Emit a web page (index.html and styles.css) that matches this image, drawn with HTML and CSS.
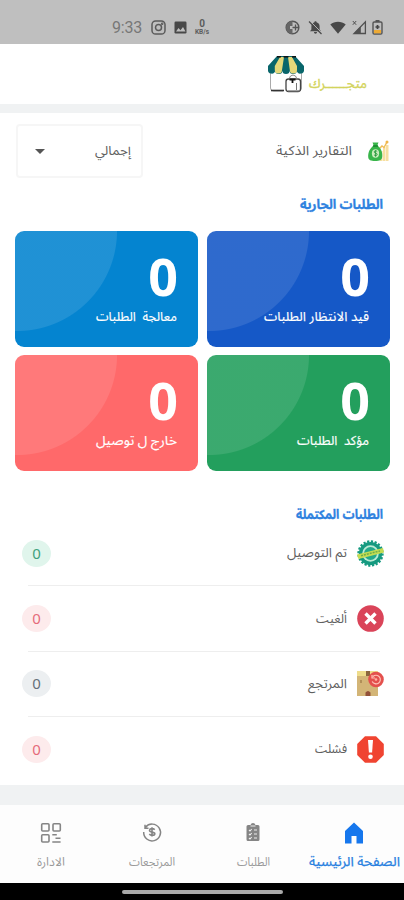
FILE: index.html
```html
<!DOCTYPE html>
<html lang="ar" dir="rtl">
<head>
<meta charset="utf-8">
<title>متجرك</title>
<link rel="stylesheet" href="styles.css">
</head>
<body>
<div class="status" dir="ltr">
  <span class="clock">9:33</span>
  <svg class="st-insta" width="15" height="15" viewBox="0 0 15 15" fill="none" stroke="#5b5b5b" stroke-width="1.5"><rect x="1" y="1" width="13" height="13" rx="3.6"/><circle cx="7.5" cy="7.5" r="3"/><circle cx="11.2" cy="3.8" r=".5"/></svg>
  <svg class="st-pic" width="13" height="13" viewBox="0 0 13 13"><rect x=".5" y=".5" width="12" height="12" rx="1.2" fill="#484848"/><path d="M2 10.5 4.5 7l2 2.2L9 6l2.5 4.5z" fill="#bfbfbf"/></svg>
  <span class="speed"><b>0</b><i>KB/s</i></span>
  <svg class="st-data" width="15" height="15" viewBox="0 0 15 15"><circle cx="7.5" cy="7.5" r="6.3" fill="none" stroke="#555" stroke-width="1.5"/><path d="M7.5 1a6.5 6.5 0 0 0 0 13V9H5V6h2.500z" fill="#666"/><path d="M7.500 7.500h6M10.500 4.500v6" stroke="#555" stroke-width="1.300"/></svg>
  <svg class="st-bell" width="15" height="15" viewBox="0 0 15 15"><path d="M7.500 1.200c.8 0 1.100.5 1.100 1.100 2 .6 3 2.200 3 4.200v3l1.400 1.700H2l1.400-1.700v-3c0-2 1-3.600 3-4.200 0-.6.300-1.100 1.100-1.100zM6 12h3c0 1-.6 1.700-1.500 1.700S6 13 6 12z" fill="#4a4a4a"/><path d="M2.300 1.300l12 12" stroke="#bfbfbf" stroke-width="1"/><path d="M1 1.500l12.500 12.500" stroke="#4a4a4a" stroke-width="1.300"/></svg>
  <svg class="st-wifi" width="16" height="13" viewBox="0 0 16 13"><path d="M.3 3.500C4.700-.2 11.300-.2 15.700 3.500L8 12.800z" fill="#484848"/></svg>
  <svg class="st-sig" width="15" height="15" viewBox="0 0 15 15"><path d="M13.400 1.800v11.700H2z" fill="none" stroke="#505050" stroke-width="1.300"/><path d="M8.800 6.600v7H2z" fill="#505050"/><path d="M.8 1l3.400 3.800M4.200 1 .8 4.800" stroke="#505050" stroke-width="1"/></svg>
  <svg class="st-bat" width="11" height="15" viewBox="0 0 11 15"><path d="M3.500 0h4v2h-4z" fill="#555"/><rect x="1" y="2" width="9" height="12" rx="1.200" fill="none" stroke="#555" stroke-width="1.400"/><path d="M2 10h7v3.300H2z" fill="#edaa35"/><path d="M5.500 5v4M3.500 7h4" stroke="#444" stroke-width="1.700"/></svg>
</div>

<header class="brand">
  <svg class="brand-name" width="58" height="18" viewBox="0 0 58 18"><text x="58" y="13" direction="rtl" textLength="58" lengthAdjust="spacingAndGlyphs">متجــــــرك</text></svg>
  <svg class="shop" width="38" height="37" viewBox="0 0 38 37">
    <path d="M3.500 16v16q0 3 3 3H16M34.500 16v16q0 2-1.500 2.500" fill="none" stroke="#aaa" stroke-width="1"/>
    <path d="M4 34.500h13" stroke="#333" stroke-width="1.600"/>
    <path d="M10 0h18l9 10v3.500a3.500 3.500 0 0 1-7.200 1 3.600 3.600 0 0 1-7.200 0 3.600 3.600 0 0 1-7.200 0 3.600 3.600 0 0 1-7.200 0 3.500 3.500 0 0 1-7.200-1V10z" fill="#09666b"/>
    <path d="M13 1h4l-2 13a3.600 3.600 0 0 1-7.200 0V10zM21 1h4l5 9v4a3.600 3.600 0 0 1-7.200 0z" fill="#e5d879"/>
    <path d="M10 .8h4M16.500.8h5M25 .8h4" stroke="#111" stroke-width="1.600"/>
    <rect x="19" y="23" width="14.500" height="12.500" rx="2.500" fill="#fff" stroke="#444" stroke-width="1.300"/>
    <path d="M22 23q1-4 4-4t4 4" fill="none" stroke="#888" stroke-width="1"/>
    <path d="M22.500 23.500h6M25.500 23v4" stroke="#111" stroke-width="1.800"/>
    <path d="M29.500 27v7M21 35h12" stroke="#777" stroke-width="1"/>
  </svg>
</header>

<main>
  <section class="panel">
    <div class="filter">
      <svg class="money" width="22" height="22" viewBox="0 0 22 22">
        <path d="M13 11h2.500v10H13zM16 7h2.500v14H16zM19 5h2.500v16H19z" fill="#f7dfa0"/>
        <path d="M11 10l4-4 2 1.500L20 2" fill="none" stroke="#efbd57" stroke-width="1.500"/><circle cx="20" cy="2" r="1.500" fill="#f0b548"/>
        <path d="M5.500 2.500h6L10.300 5.500c3.700 2.500 5.500 7 4.900 11.500-.4 3-2.500 4-7 4s-6.800-1-7-4c-.3-5 2-9 5.500-11.500z" fill="#38b54a"/>
        <path d="M6 6h5" stroke="#14862d" stroke-width="1.500"/><ellipse cx="8.500" cy="13.500" rx="3.600" ry="4.200" fill="#ccecbd"/>
        <path d="M10.200 11.500c-1-1.200-3.200-.8-3 .6s2.900.8 3 2.200-2.200 1.700-3.200.5M8.600 10.300v6.500" fill="none" stroke="#25983a" stroke-width=".9"/>
      </svg>
      <svg class="label" width="76" height="22" viewBox="0 0 76 22"><text x="76" y="14.500" direction="rtl" textLength="76" lengthAdjust="spacingAndGlyphs">التقارير الذكية</text></svg>
      <div class="select">
        <svg class="label" width="37" height="22" viewBox="0 0 37 22"><text x="37" y="14.500" direction="rtl" textLength="36" lengthAdjust="spacingAndGlyphs">إجمالي</text></svg>
        <span class="caret"></span>
      </div>
    </div>
    <h2><svg width="84" height="22" viewBox="0 0 84 22"><text x="84" y="15" direction="rtl" textLength="83" lengthAdjust="spacingAndGlyphs">الطلبات الجارية</text></svg></h2>
    <div class="cards">
      <article class="card blue"><strong>0</strong><svg width="106" height="24" viewBox="0 0 106 24"><text x="105" y="16.500" direction="rtl" textLength="105" lengthAdjust="spacingAndGlyphs">قيد الانتظار الطلبات</text></svg></article>
      <article class="card sky"><strong>0</strong><svg width="82" height="24" viewBox="0 0 82 24"><text x="81" y="16.500" direction="rtl" textLength="81" lengthAdjust="spacingAndGlyphs">معالجة &#160;الطلبات</text></svg></article>
      <article class="card green"><strong>0</strong><svg width="73" height="24" viewBox="0 0 73 24"><text x="72" y="16.500" direction="rtl" textLength="72" lengthAdjust="spacingAndGlyphs">مؤكد &#160;الطلبات</text></svg></article>
      <article class="card coral"><strong>0</strong><svg width="82" height="24" viewBox="0 0 82 24"><text x="81" y="16.500" direction="rtl" textLength="81" lengthAdjust="spacingAndGlyphs">خارج ل توصيل</text></svg></article>
    </div>
    <h2 class="done"><svg width="87" height="22" viewBox="0 0 87 22"><text x="87" y="15" direction="rtl" textLength="87" lengthAdjust="spacingAndGlyphs">الطلبات المكتملة</text></svg></h2>
    <ul class="rows">
      <li>
        <svg width="27" height="27" viewBox="0 0 27 27"><circle cx="13.500" cy="13.500" r="11.600" fill="#159a80"/><circle cx="13.500" cy="13.500" r="12" fill="none" stroke="#159a80" stroke-width="2.400" stroke-dasharray="2.200 1.570"/><circle cx="13.500" cy="13.500" r="8.300" fill="#bcebd5"/><circle cx="13.500" cy="13.500" r="6.500" fill="#24a98b"/><path d="M0 14.500 26 8l1 4.500L1.500 19z" fill="#c4dc52"/><path d="M4 15.700l19-4.700" stroke="#6eae4c" stroke-width="1.500" stroke-dasharray="2 1"/></svg>
        <svg class="label" width="60" height="22" viewBox="0 0 60 22"><text x="60" y="15" direction="rtl" textLength="60" lengthAdjust="spacingAndGlyphs">تم التوصيل</text></svg>
        <span class="count mint">0</span>
      </li>
      <li>
        <svg width="27" height="27" viewBox="0 0 27 27"><circle cx="13.500" cy="13.500" r="13.300" fill="#da4459"/><path d="M8.500 8.500l10 10M18.500 8.500l-10 10" stroke="#fff" stroke-width="3.400"/></svg>
        <svg class="label" width="31" height="22" viewBox="0 0 31 22"><text x="31" y="15" direction="rtl" textLength="31" lengthAdjust="spacingAndGlyphs">ألغيت</text></svg>
        <span class="count pink">0</span>
      </li>
      <li>
        <svg width="27" height="27" viewBox="0 0 27 27"><path d="M0 1h21v25H0z" fill="#d3b577"/><path d="M0 1h21v5H0z" fill="#eedc8b"/><path d="M9 1h4v5H9z" fill="#8b653d"/><path d="M8.500 22.500q2.500-3 5 0v3.500h-5z" fill="#925139"/><path d="M4 10v3" stroke="#8d6a3a"/><circle cx="19" cy="9.500" r="7.800" fill="#e4504d"/><path d="M16 6.500a4.300 4.300 0 1 1-.8 5M15 5v3h3" fill="none" stroke="#ffc4b8" stroke-width="1.200"/><circle cx="19" cy="9.500" r="1.300" fill="#ffb2a6"/></svg>
        <svg class="label" width="39" height="22" viewBox="0 0 39 22"><text x="39" y="15" direction="rtl" textLength="39" lengthAdjust="spacingAndGlyphs">المرتجع</text></svg>
        <span class="count gray">0</span>
      </li>
      <li>
        <svg width="27" height="27" viewBox="0 0 27 27"><path d="M8 .2h11L26.800 8v11L19 26.800H8L.2 19V8z" fill="#f04431"/><path d="M11 4h5l-.9 12.500h-3.200z" fill="#fff"/><circle cx="13.500" cy="20.800" r="2.300" fill="#fff"/></svg>
        <svg class="label" width="32" height="22" viewBox="0 0 32 22"><text x="32" y="15" direction="rtl" textLength="32" lengthAdjust="spacingAndGlyphs">فشلت</text></svg>
        <span class="count pink">0</span>
      </li>
    </ul>
  </section>
</main>

<nav>
  <a class="active">
    <svg width="22" height="22" viewBox="0 0 22 22"><path d="M11 .5 20 9v12.500h-6.500V14h-5v7.500H2V9z" fill="#1677ed"/></svg>
    <svg width="92" height="24" viewBox="0 0 92 24"><text x="92" y="16" direction="rtl" textLength="91" lengthAdjust="spacingAndGlyphs">الصفحة الرئيسية</text></svg>
  </a>
  <a>
    <svg width="22" height="22" viewBox="0 0 22 22"><path d="M6 3h2.500a2.600 2.600 0 0 1 5 0H16q1.500 0 1.500 1.500v13Q17.500 19 16 19H6q-1.500 0-1.500-1.500v-13Q4.500 3 6 3z" fill="#858585"/><path d="M7 8l1 1 1.700-2M12 8h3M7 12l1 1 1.700-2M12 12h3M7 16l1 1 1.700-2M12 16h3M8.500 4h5" fill="none" stroke="#eee" stroke-width="1.100"/></svg>
    <svg width="34" height="24" viewBox="0 0 34 24"><text x="34" y="16" direction="rtl" textLength="33" lengthAdjust="spacingAndGlyphs">الطلبات</text></svg>
  </a>
  <a>
    <svg width="22" height="22" viewBox="0 0 22 22" fill="none" stroke="#858585" stroke-width="1.500"><path d="M4.500 5.300A8.400 8.400 0 1 1 2.700 10M4 2.800v3.400h3.500"/><path d="M13.700 7.700c-1.500-1.700-5.200-1.300-5.200.7 0 2.300 5.300 1.100 5.300 3.300 0 2-3.800 2.200-5.500.4M11 5.300v9.300" stroke-width="1.600"/></svg>
    <svg width="46" height="24" viewBox="0 0 46 24"><text x="46" y="16" direction="rtl" textLength="46" lengthAdjust="spacingAndGlyphs">المرتجعات</text></svg>
  </a>
  <a>
    <svg width="22" height="22" viewBox="0 0 22 22" fill="none" stroke="#858585" stroke-width="1.600"><rect x="1.700" y="1.700" width="7.300" height="7.300" rx="1"/><rect x="13" y="1.700" width="7.300" height="7.300" rx="1"/><rect x="1.700" y="12.700" width="7.300" height="7.300" rx="1"/><path d="M12.300 12.800h4.500M15.500 16.300h5M12.300 20h8.300"/></svg>
    <svg width="29" height="24" viewBox="0 0 29 24"><text x="29" y="16" direction="rtl" textLength="28" lengthAdjust="spacingAndGlyphs">الادارة</text></svg>
  </a>
</nav>
<footer><span></span></footer>
</body>
</html>
```

FILE: styles.css
```css
* { box-sizing: border-box; }
body { margin: 0; width: 404px; height: 900px; overflow: hidden; display: flex; flex-direction: column; background: #fff; color: #555; font-family: "Noto Sans Arabic", "DejaVu Sans", sans-serif; }
svg { display: block; flex: none; overflow: visible; }
svg text { font-size: 13px; fill: #606060; }
.status { height: 44px; flex: none; background: #bfbfbf; display: flex; align-items: center; padding: 11px 21px 0 112px; }
.clock { width: 39px; font: 16px/18px Roboto, sans-serif; letter-spacing: -.2px; color: #777; }
.st-pic { margin-left: 8px; }
.speed { margin-left: 7px; width: 16px; display: flex; flex-direction: column; align-items: center; gap: 1px; color: #5c5c5c; font-family: Roboto, sans-serif; }
.speed b { font-size: 10px; line-height: 9px; }
.speed i { font: bold 6.5px/7px Roboto, sans-serif; }
.st-data { margin-left: 75px; }
.st-bell { margin-left: 8px; }
.st-wifi { margin-left: 7px; }
.st-sig { margin-left: 6px; }
.st-bat { margin-left: auto; }
.brand { height: 60px; flex: none; display: flex; align-items: flex-start; padding: 12px 37px 0 0; }
.brand-name { margin-top: 19px; }
.brand-name text { font-size: 13px; fill: #d3d45c; stroke: #d3d45c; stroke-width: .35px; }
.shop { margin-right: 4px; }
main { height: 701px; flex: none; background: #f0f2f3; padding: 9px 0 20px; }
.panel { height: 672px; background: #fff; padding-top: 11px; }
.filter { height: 54px; display: flex; align-items: center; padding: 0 15px 0 16px; }
.filter > .label { margin-right: 15px; }
.select { margin-right: auto; width: 127px; height: 54px; border: 2px solid #f6f6f6; border-radius: 4px; display: flex; align-items: center; justify-content: space-between; padding: 0 10px 0 17px; }
.caret { border: 5px solid transparent; border-top-color: #555; border-bottom: 0; }
h2 { margin: 0; height: 53px; padding: 16px 21px 0 0; }
h2 text { fill: #2f82df; stroke: #2f82df; stroke-width: .3px; }
.cards { display: grid; grid-template-columns: 183px 183px; grid-template-rows: 116px 116px; gap: 8px 9px; padding-right: 14px; }
.card { border-radius: 9px; color: #fff; padding: 18px 20px 0 0; background-image: radial-gradient(circle 101px at 2px 0, rgba(255,255,255,.11) 99.5px, transparent 100.5px); }
.card strong { display: block; height: 55px; font: bold 52px/54px "Noto Sans", sans-serif; }
.card text { fill: #fff; stroke: #fff; stroke-width: .15px; }
.blue { background-color: #1558c7; }
.sky { background-color: #0484d0; }
.green { background-color: #239f5d; }
.coral { background-color: #ff696a; }
h2.done { height: 49px; padding-top: 33px; }
.rows { margin: 0; padding: 0 20px 0 22px; list-style: none; }
.rows li { height: 65.400px; display: flex; align-items: center; position: relative; padding-top: 1px; }
.rows li + li::before { content: ""; position: absolute; top: 0; left: 6px; right: 4px; height: 1px; background: #eee; }
.rows .label { margin-right: 10px; }
.count { margin-right: auto; width: 29px; height: 27px; border-radius: 50%; display: flex; align-items: center; justify-content: center; font: 15px/27px "Noto Sans", sans-serif; }
.mint { color: #3fa17e; background: #e0f5ec; }
.pink { color: #e56b7b; background: #fdebec; }
.gray { color: #66707a; background: #eceff1; }
nav { height: 78px; flex: none; background: #fdfdfd; display: grid; grid-template-columns: repeat(4, 101px); }
nav a { display: flex; flex-direction: column; align-items: center; padding-top: 17px; gap: 6px; }
nav text { fill: #999; font-size: 12px; }
nav .active text { fill: #2880df; font-size: 13px; stroke: #2880df; stroke-width: .25px; }
footer { flex: 1; background: #000; display: flex; justify-content: center; padding-top: 7px; }
footer span { width: 161px; height: 4px; border-radius: 2px; background: #a9a9a9; }
```
